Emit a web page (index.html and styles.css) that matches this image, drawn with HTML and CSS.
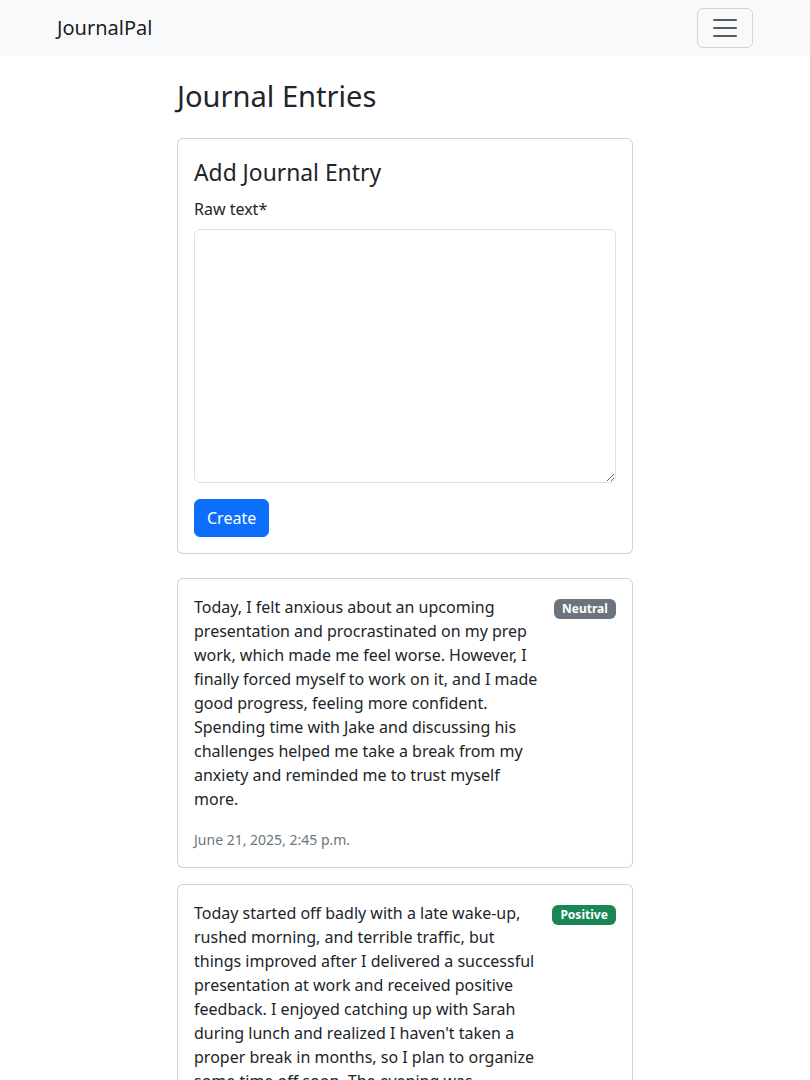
FILE: index.html
```html
<!DOCTYPE html>
<html lang="en">
<head>
<meta charset="utf-8">
<title>JournalPal</title>
<link rel="stylesheet" href="styles.css">
</head>
<body>
<nav class="navbar">
  <div class="nav-inner">
    <a class="brand" href="#">JournalPal</a>
    <button class="toggler" type="button" aria-label="Toggle navigation">
      <svg width="30" height="30" viewBox="0 0 30 30"><path d="M4 7h22M4 15h22M4 23h22" stroke="rgba(33,37,41,0.75)" stroke-width="2" stroke-linecap="round" stroke-miterlimit="10"/></svg>
    </button>
  </div>
</nav>
<main class="main">
  <h1 class="page-title">Journal Entries</h1>
  <div class="card form-card">
    <div class="card-body">
      <h4 class="card-title">Add Journal Entry</h4>
      <form>
        <div class="field">
          <label class="form-label" for="raw">Raw text*</label>
          <textarea id="raw" class="form-control" rows="10"></textarea>
        </div>
        <button type="button" class="btn-primary">Create</button>
      </form>
    </div>
  </div>

  <div class="card entry">
    <div class="card-body">
      <div class="entry-head">
        <p class="entry-text">Today, I felt anxious about an upcoming presentation and procrastinated on my prep work, which made me feel worse. However, I finally forced myself to work on it, and I made good progress, feeling more confident. Spending time with Jake and discussing his challenges helped me take a break from my anxiety and reminded me to trust myself more.</p>
        <div class="badge-wrap"><span class="badge neutral">Neutral</span></div>
      </div>
      <p class="entry-date"><small>June 21, 2025, 2:45 p.m.</small></p>
    </div>
  </div>

  <div class="card entry">
    <div class="card-body">
      <div class="entry-head">
        <p class="entry-text">Today started off badly with a late wake-up, rushed morning, and terrible traffic, but things improved after I delivered a successful presentation at work and received positive feedback. I enjoyed catching up with Sarah during lunch and realized I haven't taken a proper break in months, so I plan to organize some time off soon. The evening was relaxing and I went to bed feeling grateful.</p>
        <div class="badge-wrap"><span class="badge positive">Positive</span></div>
      </div>
      <p class="entry-date"><small>June 20, 2025, 9:12 p.m.</small></p>
    </div>
  </div>
</main>
</body>
</html>
```
FILE: styles.css
```css
* { box-sizing: border-box; }
html, body { margin: 0; padding: 0; }
body {
  font-family: "Noto Sans", "Liberation Sans", sans-serif;
  font-size: 16px;
  line-height: 1.5;
  color: #212529;
  background: #fff;
}
.navbar {
  background: #f8f9fa;
  padding: 8px 0;
}
.nav-inner {
  width: 720px;
  margin: 0 auto;
  padding: 0 12px;
  display: flex;
  align-items: center;
  justify-content: space-between;
}
.brand {
  font-size: 20px;
  color: rgba(0,0,0,0.9);
  text-decoration: none;
  padding: 5px 0;
  line-height: 1.5;
}
.toggler {
  width: 56px;
  height: 40px;
  padding: 4px 12px;
  background: transparent;
  border: 1px solid rgba(0,0,0,0.15);
  border-radius: 6px;
  display: flex;
  align-items: center;
  justify-content: center;
}
.toggler svg { display: block; }
.main {
  width: 456px;
  margin: 23px auto 0;
}
.page-title {
  font-size: 29.1px;
  font-weight: 400;
  line-height: 35px;
  margin: 0 0 24px;
}
.card {
  border: 1px solid rgba(0,0,0,0.175);
  border-radius: 6px;
  background: #fff;
}
.card-body { padding: 16px; }
.form-card { margin-bottom: 24px; }
.card-title {
  font-size: 22.83px;
  font-weight: 400;
  line-height: 35.2px;
  margin: 0 0 7px;
}
.field { margin-bottom: 16px; }
.form-label {
  display: block;
  margin-bottom: 8px;
}
.form-control {
  display: block;
  width: 100%;
  height: 254px;
  padding: 6px 12px;
  font: inherit;
  line-height: 1.5;
  color: #212529;
  border: 1px solid #dee2e6;
  border-radius: 6px;
  resize: vertical;
}
.btn-primary {
  font: inherit;
  line-height: 1.5;
  color: #fff;
  background: #0d6efd;
  border: 1px solid #0d6efd;
  border-radius: 6px;
  padding: 6px 12px;
}
.entry { margin-bottom: 16px; }
.entry-head {
  display: flex;
  justify-content: space-between;
  align-items: flex-start;
  gap: 16px;
}
.entry-text { margin: 0 0 16px; }
.badge-wrap { flex: none; }
.badge {
  display: inline-block;
  padding: 4.2px 8.2px;
  font-size: 12px;
  font-weight: 700;
  line-height: 1;
  color: #fff;
  border-radius: 6px;
  white-space: nowrap;
  vertical-align: baseline;
}
.neutral { background: #6c757d; }
.positive { background: #198754; }
.entry-date {
  margin: 0;
  color: #6c757d;
}
.entry-date small { font-size: 14px; }
```
